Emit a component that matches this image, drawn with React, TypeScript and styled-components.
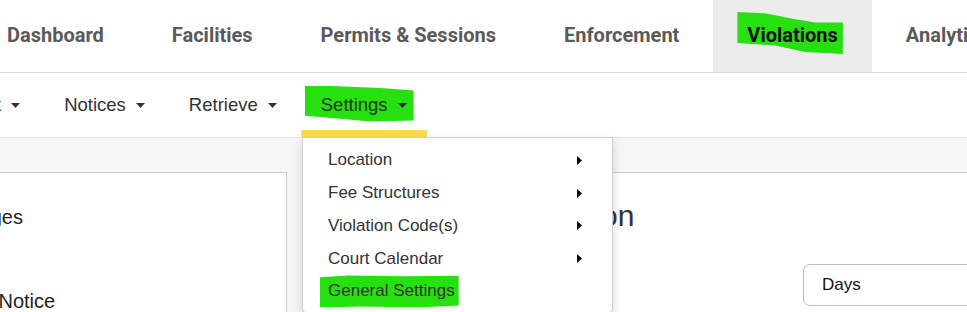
import react from "react";
import styled, { createGlobalStyle, css } from "styled-components";

const topTabs = ["Dashboard", "Facilities", "Permits & Sessions", "Enforcement", "Violations", "Analytics"];
const subItems = ["Desk", "Notices", "Retrieve", "Settings"];
const menuItems = [
    { label: "Location", more: true },
    { label: "Fee Structures", more: true },
    { label: "Violation Code(s)", more: true },
    { label: "Court Calendar", more: true },
    { label: "General Settings", more: false },
];

function Caret ()
{
    return (
        <CaretIcon width="9" height="5" viewBox="0 0 9 5" aria-hidden="true">
            <path d="M0 0H9L4.5 5Z" fill="currentColor"/>
        </CaretIcon>
    );
}

function SideCaret ()
{
    return (
        <svg width="5" height="9" viewBox="0 0 5 9" aria-hidden="true">
            <path d="M0 0L5 4.5L0 9Z" fill="#000"/>
        </svg>
    );
}

const content = function App ()
{
    return (
        <>
            <GlobalStyle/>
            <Page>
                <TopNav>
                    {topTabs.map(tab => (
                        <Tab key={tab} $active={tab === "Violations"}>
                            {tab === "Violations" ? <Marker $shape="tab">{tab}</Marker> : tab}
                        </Tab>
                    ))}
                </TopNav>

                <SubNav>
                    {subItems.map(item => (
                        <SubItem key={item} $open={item === "Settings"}>
                            {
                                item === "Settings"
                                    ? <Marker $shape="sub">{item}<Caret/></Marker>
                                    : <>{item}<Caret/></>
                            }
                        </SubItem>
                    ))}
                </SubNav>

                <Workspace>
                    <SideCard>
                        <SideLink>Ranges</SideLink>
                        <SideLink>Late Notice</SideLink>
                    </SideCard>
                    <MainCard>
                        <Heading>Violation Configuration</Heading>
                        <FormRow>
                            <FieldLabel>Grace Period Unit</FieldLabel>
                            <SelectBox>Days</SelectBox>
                        </FormRow>
                    </MainCard>
                </Workspace>

                <Dropdown>
                    {menuItems.map(item => (
                        <MenuItem key={item.label}>
                            {
                                item.more
                                    ? item.label
                                    : <Marker $shape="row">{item.label}</Marker>
                            }
                            {item.more && <SideCaret/>}
                        </MenuItem>
                    ))}
                </Dropdown>
            </Page>
        </>
    );
};

/*
|--------------------------------------------------------------------------
| Styled
|--------------------------------------------------------------------------
*/

const GlobalStyle = createGlobalStyle`
    html, body { margin: 0; padding: 0; background: #fff; }
    body { font-family: "Liberation Sans", Arial, sans-serif; overflow: hidden; }
    * { box-sizing: border-box; }
`;

const Page = styled.div`
    position: relative;
    width: 967px;
    height: 312px;
    overflow: hidden;
    background: #fff;
`;

const TopNav = styled.nav`
    display: flex;
    height: 73px;
    margin-left: -27px;
    border-bottom: 1px solid #dcdcdc;
`;

const Tab = styled.div<{ $active?: boolean }>`
    display: flex;
    align-items: center;
    padding: 0 34px 2px;
    white-space: nowrap;
    font-family: Roboto, "Liberation Sans", sans-serif;
    font-weight: 700;
    font-size: 20px;
    color: #5a5a5a;
    ${p => p.$active && css`
        background: #ececec;
        color: #111;
    `}
`;

const shapes = {
    tab: css`
        inset: -11px -5px -7px -10px;
        clip-path: polygon(0 0, 26% 3%, 55% 17%, 74% 25%, 100% 25%, 100% 100%, 64% 95%, 36% 80%, 0 74%);
    `,
    sub: css`
        inset: -8px -7px -6px -16px;
        clip-path: polygon(0 0, 30% 2%, 70% 7%, 100% 14%, 100% 97%, 60% 100%, 30% 92%, 0 84%);
    `,
    row: css`
        inset: -6px -4px -6px -8px;
        clip-path: polygon(0 6%, 20% 0, 60% 3%, 100% 1%, 100% 94%, 70% 100%, 30% 97%, 0 100%);
    `,
};

const Marker = styled.span<{ $shape: keyof typeof shapes }>`
    position: relative;
    z-index: 0;
    display: inline-flex;
    align-items: center;
    gap: 10px;

    &::before {
        content: "";
        position: absolute;
        z-index: -1;
        background: #27e010;
        ${p => shapes[p.$shape]}
    }
`;

const SubNav = styled.nav`
    display: flex;
    height: 64px;
    margin-left: -63px;
`;

const SubItem = styled.div<{ $open?: boolean }>`
    display: flex;
    align-items: center;
    gap: 10px;
    margin: 0 2px;
    padding: 0 20px 1px;
    white-space: nowrap;
    font-size: 18.5px;
    color: #333;
    ${p => p.$open && css`
        box-shadow: inset 0 -7px 0 #f8d94f;
        color: #1c3414;
    `}
`;

const CaretIcon = styled.svg`
    display: block;
    flex: none;
    margin-top: 1px;
`;

const Workspace = styled.div`
    display: flex;
    gap: 16px;
    height: 175px;
    margin-left: -64px;
    padding-top: 34px;
    border-top: 1px solid #e2e2e2;
    background: #f6f6f6;
`;

const SideCard = styled.aside`
    flex: none;
    display: flex;
    flex-direction: column;
    gap: 60px;
    width: 351px;
    padding: 32px 20px 0 17px;
    background: #fff;
    border: 1px solid #cfcfcf;
    border-bottom: none;
`;

const SideLink = styled.div`
    font-size: 20px;
    line-height: 24px;
    color: #222;
`;

const MainCard = styled.section`
    flex: none;
    width: 700px;
    padding: 25px 0 0 29px;
    background: #fff;
    border-top: 1px solid #cfcfcf;
    border-left: 1px solid #cfcfcf;
`;

const Heading = styled.h2`
    margin: 0;
    font-size: 30px;
    font-weight: 400;
    line-height: 36px;
    color: #333;
    white-space: nowrap;
`;

const FormRow = styled.div`
    display: grid;
    grid-template-columns: 470px 300px;
    align-items: center;
    margin-top: 30px;
`;

const FieldLabel = styled.label`
    font-size: 17px;
    color: #333;
`;

const SelectBox = styled.div`
    height: 42px;
    display: flex;
    align-items: center;
    padding: 0 18px;
    border: 1px solid #bdbdbd;
    border-radius: 7px;
    font-size: 17px;
    color: #111;
`;

const Dropdown = styled.ul`
    position: absolute;
    left: 302px;
    top: 137px;
    width: 311px;
    margin: 0;
    padding: 6px 0 4px;
    list-style: none;
    background: #fff;
    border: 1px solid #cfcfcf;
    border-radius: 0 0 4px 4px;
    box-shadow: 0 6px 12px rgba(0, 0, 0, 0.15);
`;

const MenuItem = styled.li`
    display: flex;
    align-items: center;
    justify-content: space-between;
    height: 32.75px;
    padding: 0 30px 0 25px;
    font-size: 17px;
    color: #333;
    white-space: nowrap;
`;

Object.freeze(content);
export default content;
